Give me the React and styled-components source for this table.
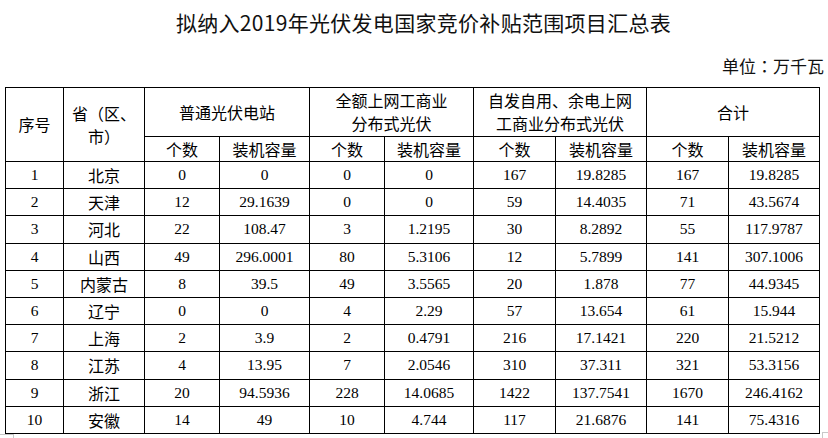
import React from "react";
import styled, { createGlobalStyle } from "styled-components";

const GlobalStyle = createGlobalStyle`
  html, body {
    margin: 0;
    padding: 0;
    background: #ffffff;
  }
  body {
    width: 828px;
    height: 438px;
    overflow: hidden;
    font-family: "Noto Sans CJK SC", sans-serif;
    color: #000;
  }
`;

const rows = [
  ["1", "北京", "0", "0", "0", "0", "167", "19.8285", "167", "19.8285"],
  ["2", "天津", "12", "29.1639", "0", "0", "59", "14.4035", "71", "43.5674"],
  ["3", "河北", "22", "108.47", "3", "1.2195", "30", "8.2892", "55", "117.9787"],
  ["4", "山西", "49", "296.0001", "80", "5.3106", "12", "5.7899", "141", "307.1006"],
  ["5", "内蒙古", "8", "39.5", "49", "3.5565", "20", "1.878", "77", "44.9345"],
  ["6", "辽宁", "0", "0", "4", "2.29", "57", "13.654", "61", "15.944"],
  ["7", "上海", "2", "3.9", "2", "0.4791", "216", "17.1421", "220", "21.5212"],
  ["8", "江苏", "4", "13.95", "7", "2.0546", "310", "37.311", "321", "53.3156"],
  ["9", "浙江", "20", "94.5936", "228", "14.0685", "1422", "137.7541", "1670", "246.4162"],
  ["10", "安徽", "14", "49", "10", "4.744", "117", "21.6876", "141", "75.4316"],
];

const colWidths = [58, 81, 75, 90, 75, 89, 82, 91, 82, 91];

function App() {
  return (
    <Page>
      <GlobalStyle />
      <Title>拟纳入2019年光伏发电国家竞价补贴范围项目汇总表</Title>
      <UnitRow>
        <Unit>
          单位<Punct>：</Punct>万千瓦
        </Unit>
      </UnitRow>
      <Table>
        <colgroup>
          {colWidths.map((w, i) => (
            <col key={i} style={{ width: w }} />
          ))}
        </colgroup>
        <thead>
          <TopHeadRow>
            <Head rowSpan={2}>序号</Head>
            <Head rowSpan={2}>
              省<Punct>（</Punct>区、
              <br />
              市<Punct>）</Punct>
            </Head>
            <Head colSpan={2}>普通光伏电站</Head>
            <Head colSpan={2}>
              全额上网工商业
              <br />
              分布式光伏
            </Head>
            <Head colSpan={2}>
              自发自用、余电上网
              <br />
              工商业分布式光伏
            </Head>
            <Head colSpan={2}>合计</Head>
          </TopHeadRow>
          <SubHeadRow>
            {[0, 1, 2, 3].map((i) => (
              <React.Fragment key={i}>
                <Head>个数</Head>
                <Head>装机容量</Head>
              </React.Fragment>
            ))}
          </SubHeadRow>
        </thead>
        <tbody>
          {rows.map((r) => (
            <DataRow key={r[0]}>
              {r.map((v, i) => (
                <Cell key={i} $text={i === 1}>
                  {v}
                </Cell>
              ))}
            </DataRow>
          ))}
        </tbody>
      </Table>
      <CornerLeft />
      <CornerRight />
    </Page>
  );
}

export default App;

const Page = styled.div`
  position: relative;
  width: 828px;
  height: 438px;
  padding: 0 0 0 5px;
  box-sizing: border-box;
`;

const Title = styled.h1`
  margin: 0;
  padding: 8px 0 0 14px;
  height: 38px;
  text-align: center;
  font-family: "Noto Sans CJK SC", sans-serif;
  font-weight: 400;
  font-size: 21px;
  line-height: 28px;
  letter-spacing: 0.3px;
  color: #111;
`;

const UnitRow = styled.div`
  display: flex;
  justify-content: flex-end;
  height: 41px;
  padding-right: 4px;
`;

const Unit = styled.span`
  font-family: "Noto Sans CJK SC", sans-serif;
  font-size: 17px;
  line-height: 24px;
  margin-top: 8px;
  color: #111;
`;

const Punct = styled.span`
  font-family: "Noto Sans CJK TC", sans-serif;
`;

const Table = styled.table`
  border-collapse: collapse;
  table-layout: fixed;
  width: 814px;
  font-family: "Liberation Serif", "Noto Sans CJK SC", serif;
  color: #000;
`;

const TopHeadRow = styled.tr`
  height: 49px;
`;

const SubHeadRow = styled.tr`
  height: 25px;
`;

const DataRow = styled.tr`
  height: 27.2px;
`;

const Head = styled.th`
  border: 1px solid #000;
  padding: 0;
  font-family: "Noto Sans CJK SC", sans-serif;
  font-weight: 400;
  font-size: 16px;
  line-height: 23px;
  text-align: center;
  vertical-align: middle;
`;

const Cell = styled.td`
  border: 1px solid #000;
  padding: 0;
  text-align: center;
  vertical-align: middle;
  line-height: 20px;
  font-family: ${(p) =>
    p.$text ? `"Noto Sans CJK SC", sans-serif` : `"Liberation Serif", serif`};
  font-size: ${(p) => (p.$text ? "16px" : "15.5px")};
`;

const CornerLeft = styled.span`
  position: absolute;
  left: 0;
  top: 434px;
  width: 13px;
  height: 4px;
  border-top: 1px solid #c8c8c8;
  border-right: 1px solid #c8c8c8;
`;

const CornerRight = styled.span`
  position: absolute;
  left: 822px;
  top: 432px;
  width: 6px;
  height: 6px;
  border-top: 1px solid #c8c8c8;
  border-left: 1px solid #c8c8c8;
`;
